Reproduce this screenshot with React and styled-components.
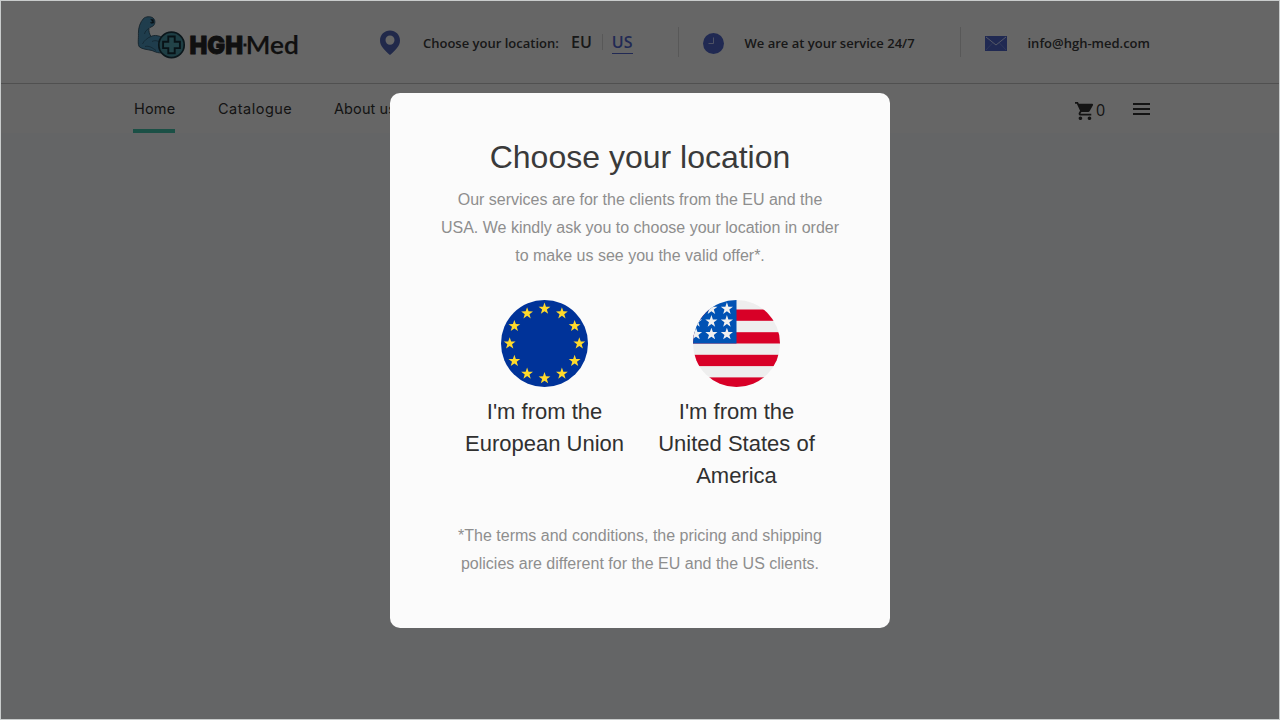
import React from 'react';
import styled, { createGlobalStyle } from 'styled-components';

const GlobalStyles = createGlobalStyle`
  * {
    box-sizing: border-box;
  }
  body {
    margin: 0;
    overflow: hidden;
    font-family: "Liberation Sans", Arial, sans-serif;
  }
`;

const Page = styled.div`
  height: 720px;
  background: #fbfcff;
`;

const Header = styled.header`
  display: flex;
  height: 84px;
  padding-left: 130px;
  background: #fff;
  border-bottom: 1px solid #c8c8c8;
  color: #3c3c3c;
  font: 600 13px/18px "Open Sans", "Noto Sans", sans-serif;
`;

const Logo = styled.svg`
  width: 180px;
  height: 60px;
  margin-top: 8px;
  flex: none;
`;

const HeaderItem = styled.div`
  display: flex;
  align-items: center;
  height: 30px;
  margin-top: 27px;
  margin-left: ${(p) => p.$gap}px;
  padding-left: ${(p) => (p.$divided ? 24 : 0)}px;
  border-left: ${(p) => (p.$divided ? '1px solid #dcdcdc' : 'none')};
  white-space: nowrap;

  svg {
    flex: none;
  }
`;

const Label = styled.span`
  width: ${(p) => p.$width}px;
  margin-left: ${(p) => p.$left}px;
  padding-top: 2px;
`;

const Region = styled.a`
  height: 23px;
  margin-left: ${(p) => p.$left}px;
  margin-top: 1px;
  font-size: 16px;
  line-height: 23px;
  color: ${(p) => (p.$active ? '#5368d2' : 'inherit')};
  border-bottom: 1px solid ${(p) => (p.$active ? '#5368d2' : 'transparent')};
`;

const RegionDivider = styled.span`
  width: 1px;
  height: 16px;
  margin-left: 10px;
  background: #dcdcdc;
`;

const Nav = styled.nav`
  display: flex;
  height: 49px;
  padding-left: 133px;
  background: #fff;
  color: #333;
  font: 400 14.5px/50px Inter, sans-serif;
`;

const NavLink = styled.a`
  width: ${(p) => p.$width}px;
  height: 49px;
  margin-right: 42px;
  padding-left: 1px;
  letter-spacing: ${(p) => p.$spacing || 0}px;
  white-space: nowrap;
  border-bottom: 4px solid ${(p) => (p.$active ? '#45c7b0' : 'transparent')};
`;

const NavTools = styled.div`
  display: flex;
  align-items: center;
  width: 205px;
  height: 49px;
  margin-left: auto;
  padding-top: 4px;
  font: 400 16px/20px "Open Sans", sans-serif;
`;

const CartCount = styled.span`
  width: 39px;
  padding-left: 2px;
  margin-top: -2px;
`;

const Burger = styled.span`
  width: 17px;
  height: 12px;
  margin-top: -4px;
  border-top: 2px solid #333;
  border-bottom: 2px solid #333;
  background: linear-gradient(#333, #333) center / 100% 2px no-repeat;
`;

const Overlay = styled.div`
  position: fixed;
  inset: 0;
  display: flex;
  align-items: flex-start;
  justify-content: center;
  padding-top: 92px;
  background: rgba(0, 0, 0, 0.6);
  border: 1px solid #c9cccc;
`;

const Modal = styled.section`
  width: 500px;
  height: 535px;
  padding: 44px 50px 0;
  border-radius: 10px;
  background: #fbfbfb;
  text-align: center;
`;

const Title = styled.h1`
  margin: 0;
  color: #3a3a3a;
  font-size: 32px;
  font-weight: 400;
  line-height: 40px;
`;

const Text = styled.p`
  margin: ${(p) => p.$top}px 0 0;
  color: #8e8e8e;
  font-size: 16px;
  line-height: 28px;
`;

const Choices = styled.div`
  display: grid;
  grid-template-columns: 163px 163px;
  gap: 29px;
  justify-content: center;
  margin-top: 30px;
  padding-left: 1px;
`;

const Choice = styled.a`
  color: #303030;
  font-size: 22px;
  line-height: 32px;

  svg {
    display: block;
    margin: 0 auto 9px;
  }
`;

// five-pointed star centred on cx, cy
const star = (cx, cy, r, inner = 0.4) =>
  Array.from({ length: 10 }, (_, i) => {
    const angle = (i * Math.PI) / 5 - Math.PI / 2;
    const len = i % 2 ? r * inner : r;
    return `${cx + len * Math.cos(angle)},${cy + len * Math.sin(angle)}`;
  }).join(' ');

const BrandLogo = () => (
  <Logo viewBox="0 0 180 60">
    <g stroke="#24485c" strokeWidth="0.8" strokeLinejoin="round">
      <path
        fill="#4f98c0"
        d="M13.500 10.500 C15.500 8.500 20.500 8 23 10 C25.500 12 25.300 15.500 23.600 17.500 C22 19 19.800 19 19 20.500 C18.500 23 19.500 26 21 28.500 C24 26.500 30 27.500 34 30.500 L36 43.500 C32 46 27 45 22 42.500 C17 41.500 12 41 9.500 39 C7.300 36.500 8.700 30.500 8.400 25.500 C8.300 19.500 10 14.500 13.500 10.500 Z"
      />
      <path
        fill="none"
        strokeWidth="0.6"
        d="M18.500 20.500 C17 22 15 23 14.500 26 M21 28.500 C18 29.500 14 32.500 12.500 36 M22 33.500 C26 31.500 29 33.500 31 35.500 M15 38.500 C19 37.500 22 39.500 26 42.500"
      />
      <path fill="#12222b" strokeWidth="0.4" d="M20.500 11 L23.500 11.500 L24 15 L21.500 15.500 L20 14.500 L22.500 14 Z" />
    </g>
    <circle cx="41.500" cy="36.900" r="12.700" fill="#4b9cab" stroke="#1c3944" strokeWidth="1.700" />
    <path
      d="M38.300 28.500 h6.400 v5.200 h5.200 v6.400 h-5.200 v5.200 h-6.400 v-5.200 h-5.200 v-6.400 h5.200 Z"
      fill="#55a9b5"
      stroke="#142e38"
      strokeWidth="1.900"
    />
    <g fill="#282828">
      <text
        x="59.500"
        y="46"
        textLength="53.500"
        lengthAdjust="spacingAndGlyphs"
        fontFamily="Inter"
        fontWeight="900"
        fontSize="25"
        stroke="#282828"
        strokeWidth="0.8"
      >
        HGH
      </text>
      <rect x="113.500" y="35.500" width="3" height="3" />
      <text x="115.800" y="46.300" textLength="53" lengthAdjust="spacingAndGlyphs" fontFamily="Lato" fontSize="25.500" stroke="#282828" strokeWidth="0.25">
        Med
      </text>
    </g>
  </Logo>
);

const PinIcon = () => (
  <svg width="20" height="25" viewBox="0 0 20 24" preserveAspectRatio="none">
    <path
      fill="#5368b8"
      fillRule="evenodd"
      d="M10 0.500 C4.400 0.500 0 4.600 0 10 C0 15.700 5.200 19.700 10 24 C14.800 19.700 20 15.700 20 10 C20 4.600 15.600 0.500 10 0.500 Z M10 5.200 A4.500 4.500 0 1 1 10 14.200 A4.500 4.500 0 1 1 10 5.200 Z"
    />
  </svg>
);

const ClockIcon = () => (
  <svg width="21" height="24" viewBox="0 0 21 24">
    <circle cx="10.500" cy="13.500" r="10.500" fill="#5068cd" />
    <path d="M10.500 7.500 V13.500 H5.500" fill="none" stroke="#c4cdfa" strokeWidth="1" />
  </svg>
);

const MailIcon = () => (
  <svg width="22" height="18" viewBox="0 0 22 18">
    <path d="M0 3 H22 V18 H0 Z" fill="#5068cd" />
    <path d="M1 4 L11 12 L21 4" fill="none" stroke="#d4dbff" strokeWidth="1" />
    <path d="M1 17 L7.500 10 M21 17 L14.500 10" fill="none" stroke="#8495e2" strokeWidth="0.700" />
  </svg>
);

const CartIcon = () => (
  <svg width="19" height="18" viewBox="1 2 21 20" preserveAspectRatio="none">
    <path
      fill="#333"
      d="M7 18c-1.100 0-1.990.900-1.990 2S5.900 22 7 22s2-.900 2-2-.900-2-2-2zM1 2v2h2l3.600 7.590-1.350 2.450c-.160.280-.250.610-.250.960 0 1.100.900 2 2 2h12v-2H7.420c-.140 0-.250-.110-.250-.250l.030-.120.900-1.630h7.450c.750 0 1.410-.410 1.750-1.030l3.580-6.490c.080-.140.120-.310.120-.480 0-.550-.450-1-1-1H5.210l-.940-2H1zm16 16c-1.100 0-1.990.900-1.990 2s.890 2 1.990 2 2-.900 2-2-.900-2-2-2z"
    />
  </svg>
);

const EuFlag = () => (
  <svg width="87" height="87" viewBox="0 0 87 87">
    <circle cx="43.500" cy="43.500" r="43.500" fill="#003399" />
    {Array.from({ length: 12 }, (_, i) => {
      const angle = (i * Math.PI) / 6;
      return (
        <polygon
          key={i}
          fill="#ffda2c"
          points={star(43.5 + 34.8 * Math.cos(angle), 43.5 + 34.8 * Math.sin(angle), 6.2)}
        />
      );
    })}
  </svg>
);

const UsFlag = () => (
  <svg width="87" height="87" viewBox="0 0 87 87">
    <clipPath id="us-circle">
      <circle cx="43.500" cy="43.500" r="43.500" />
    </clipPath>
    <g clipPath="url(#us-circle)">
      <rect width="87" height="87" fill="#eee" />
      {[9.5, 32.2, 54.8, 77.4].map((y) => (
        <rect key={y} y={y} width="87" height="11.300" fill="#d80027" />
      ))}
      <rect width="43.500" height="43.500" fill="#0052b4" />
      {[8.7, 21.5, 34.1].map((y) =>
        [3, 18.4, 33.9].map((x) => <polygon key={`${x}-${y}`} fill="#f0f0f0" points={star(x, y, 6.4)} />)
      )}
    </g>
  </svg>
);

const App = () => {
  return (
    <>
      <GlobalStyles />
      <Page>
        <Header>
          <BrandLogo />
          <HeaderItem $gap={70}>
            <PinIcon />
            <Label $left={23} $width={136}>Choose your location:</Label>
            <Region $left={12}>EU</Region>
            <RegionDivider />
            <Region $left={9} $active>US</Region>
          </HeaderItem>
          <HeaderItem $gap={45} $divided>
            <ClockIcon />
            <Label $left={21} $width={171}>We are at your service 24/7</Label>
          </HeaderItem>
          <HeaderItem $gap={44} $divided>
            <MailIcon />
            <Label $left={21} $width={123}>info@hgh-med.com</Label>
          </HeaderItem>
        </Header>
        <Nav>
          <NavLink $width={42} $spacing={0.2} $active>Home</NavLink>
          <NavLink $width={74} $spacing={0.5}>Catalogue</NavLink>
          <NavLink $width={62} $spacing={0.1}>About us</NavLink>
          <NavTools>
            <CartIcon />
            <CartCount>0</CartCount>
            <Burger />
          </NavTools>
        </Nav>
      </Page>
      <Overlay>
        <Modal>
          <Title>Choose your location</Title>
          <Text $top={9}>
            Our services are for the clients from the EU and the USA. We kindly ask you to choose your location in order
            to make us see you the valid offer*.
          </Text>
          <Choices>
            <Choice>
              <EuFlag />
              I'm from the European Union
            </Choice>
            <Choice>
              <UsFlag />
              I'm from the United States of America
            </Choice>
          </Choices>
          <Text $top={30}>
            *The terms and conditions, the pricing and shipping policies are different for the EU and the US clients.
          </Text>
        </Modal>
      </Overlay>
    </>
  );
};

export default App;
